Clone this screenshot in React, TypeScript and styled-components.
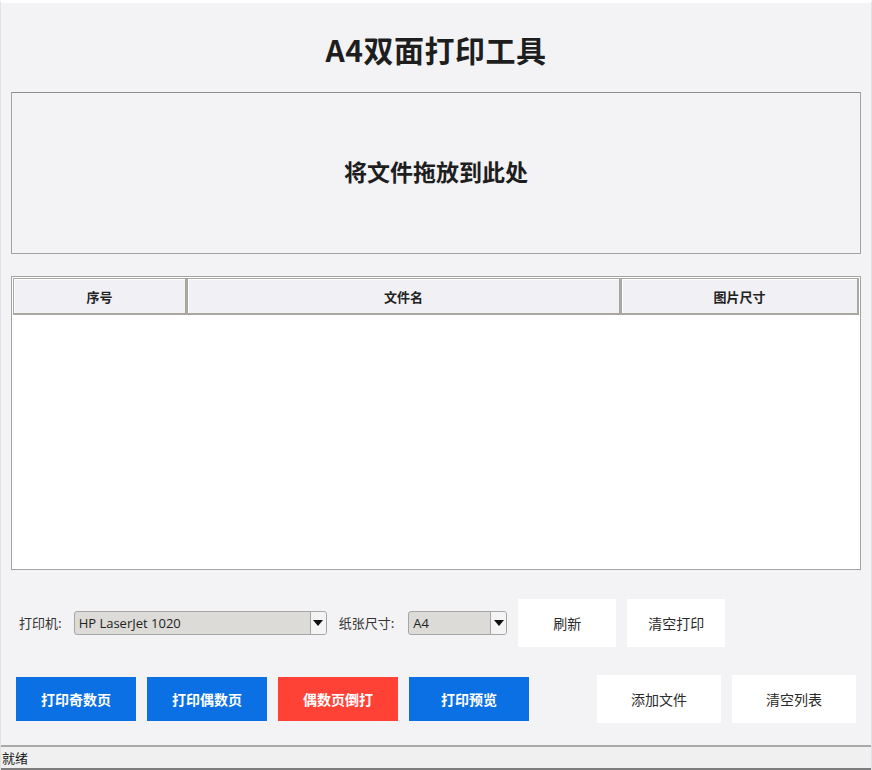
import React from "react";
import styled, { createGlobalStyle } from "styled-components";

const Global = createGlobalStyle`
  html, body { margin: 0; padding: 0; background: #f3f3f5; }
  body { font-family: "Noto Sans", "Noto Sans CJK SC", sans-serif; }
  * { box-sizing: border-box; }
`;

const Window = styled.div`
  width: 872px;
  height: 770px;
  background: #f3f3f5;
  border-top: 3px solid #ffffff;
  border-left: 1px solid #e2e2e4;
  border-right: 1px solid #e2e2e4;
  display: flex;
  flex-direction: column;
  overflow: hidden;
`;

const Title = styled.h1`
  margin: 0;
  height: 89px;
  display: flex;
  align-items: center;
  justify-content: center;
  padding-top: 3px;
  font-family: "Noto Sans CJK SC", sans-serif;
  font-weight: 700;
  font-size: 30px;
  letter-spacing: 0.5px;
  color: #1e1e1e;
`;

const Main = styled.div`
  padding: 0 10px;
  display: flex;
  flex-direction: column;
`;

const DropZone = styled.div`
  height: 162px;
  border: 1px solid #a3a3a3;
  border-top-color: #8f8f8f;
  display: flex;
  align-items: center;
  justify-content: center;
  font-family: "Noto Sans CJK SC", sans-serif;
  font-weight: 700;
  font-size: 23px;
  color: #1e1e1e;
  padding-bottom: 4px;
`;

const Table = styled.div`
  margin-top: 22px;
  height: 294px;
  border: 1px solid #a3a3a3;
  background: #ffffff;
  padding: 1px;
`;

const HeaderRow = styled.div`
  display: grid;
  grid-template-columns: 174px 434px 1fr;
  height: 37px;
`;

const HeaderCell = styled.div`
  display: flex;
  align-items: center;
  justify-content: center;
  background: #f1f1f5;
  border: 1px solid #a9a79f;
  border-right-width: 2px;
  border-bottom-width: 2px;
  box-shadow: inset 1px 1px 0 #ffffff;
  font-family: "Noto Sans CJK SC", sans-serif;
  font-weight: 700;
  font-size: 13px;
  color: #222;
`;

const ControlRow = styled.div`
  display: flex;
  align-items: center;
  margin-top: 28px;
  padding-left: 18px;
  height: 49px;
`;

const Label = styled.span<{ $gap: number }>`
  font-family: "Noto Sans CJK SC", sans-serif;
  font-size: 13px;
  color: #333;
  margin-right: ${(p) => p.$gap}px;
`;

const Combo = styled.div<{ $w: number; $after: number }>`
  width: ${(p) => p.$w}px;
  height: 24px;
  margin-right: ${(p) => p.$after}px;
  border: 1px solid #a6a6a6;
  border-radius: 3px;
  background: #dcdbd7;
  display: flex;
  align-items: stretch;
  overflow: hidden;
`;

const ComboText = styled.div`
  flex: 1;
  padding-left: 4px;
  display: flex;
  align-items: center;
  font-family: "Open Sans", "Noto Sans", sans-serif;
  font-size: 13px;
  color: #222;
`;

const ComboArrow = styled.div`
  width: 16px;
  border-left: 1px solid #a6a6a6;
  background: #f4f4f4;
  display: flex;
  align-items: center;
  justify-content: center;
  &::after {
    content: "";
    border-left: 5px solid transparent;
    border-right: 5px solid transparent;
    border-top: 6px solid #111;
  }
`;

const PlainButton = styled.button<{ $w: number; $h: number }>`
  width: ${(p) => p.$w}px;
  height: ${(p) => p.$h}px;
  border: none;
  background: #ffffff;
  font-family: "Noto Sans CJK SC", sans-serif;
  font-size: 14px;
  color: #2a2a2a;
  padding: 0;
  cursor: pointer;
`;

const ButtonGap = styled.div`
  flex: 0 0 11px;
`;

const ActionRow = styled.div`
  display: flex;
  align-items: center;
  margin-top: 27px;
  padding-left: 15px;
  padding-right: 15px;
  gap: 11px;
  height: 50px;
`;

const ColorButton = styled.button<{ $bg: string }>`
  width: 120px;
  height: 44px;
  border: none;
  background: ${(p) => p.$bg};
  color: #ffffff;
  font-family: "Noto Sans CJK SC", sans-serif;
  font-weight: 700;
  font-size: 14px;
  padding: 0;
  cursor: pointer;
`;

const Spacer = styled.div`
  flex: 1;
`;

const StatusBar = styled.div`
  margin-top: auto;
  height: 25px;
  border-top: 2px solid #a9a9a9;
  border-bottom: 2px solid #7d7d7d;
  background: #f0f0f0;
  display: flex;
  align-items: center;
  padding-left: 1px;
  font-family: "Noto Sans CJK SC", sans-serif;
  font-size: 13px;
  color: #222;
`;

const BLUE = "#0a70e4";
const RED = "#ff4136";

export default function App() {
  return (
    <>
      <Global />
      <Window>
        <Title>A4双面打印工具</Title>
        <Main>
          <DropZone>将文件拖放到此处</DropZone>
          <Table>
            <HeaderRow>
              <HeaderCell>序号</HeaderCell>
              <HeaderCell>文件名</HeaderCell>
              <HeaderCell>图片尺寸</HeaderCell>
            </HeaderRow>
          </Table>
        </Main>
        <ControlRow>
          <Label $gap={12}>打印机:</Label>
          <Combo $w={253} $after={12}>
            <ComboText>HP LaserJet 1020</ComboText>
            <ComboArrow />
          </Combo>
          <Label $gap={14}>纸张尺寸:</Label>
          <Combo $w={99} $after={11}>
            <ComboText>A4</ComboText>
            <ComboArrow />
          </Combo>
          <PlainButton $w={98} $h={48}>刷新</PlainButton>
          <ButtonGap />
          <PlainButton $w={98} $h={48}>清空打印</PlainButton>
        </ControlRow>
        <ActionRow>
          <ColorButton $bg={BLUE}>打印奇数页</ColorButton>
          <ColorButton $bg={BLUE}>打印偶数页</ColorButton>
          <ColorButton $bg={RED}>偶数页倒打</ColorButton>
          <ColorButton $bg={BLUE}>打印预览</ColorButton>
          <Spacer />
          <PlainButton $w={124} $h={48}>添加文件</PlainButton>
          <PlainButton $w={124} $h={48}>清空列表</PlainButton>
        </ActionRow>
        <StatusBar>就绪</StatusBar>
      </Window>
    </>
  );
}
